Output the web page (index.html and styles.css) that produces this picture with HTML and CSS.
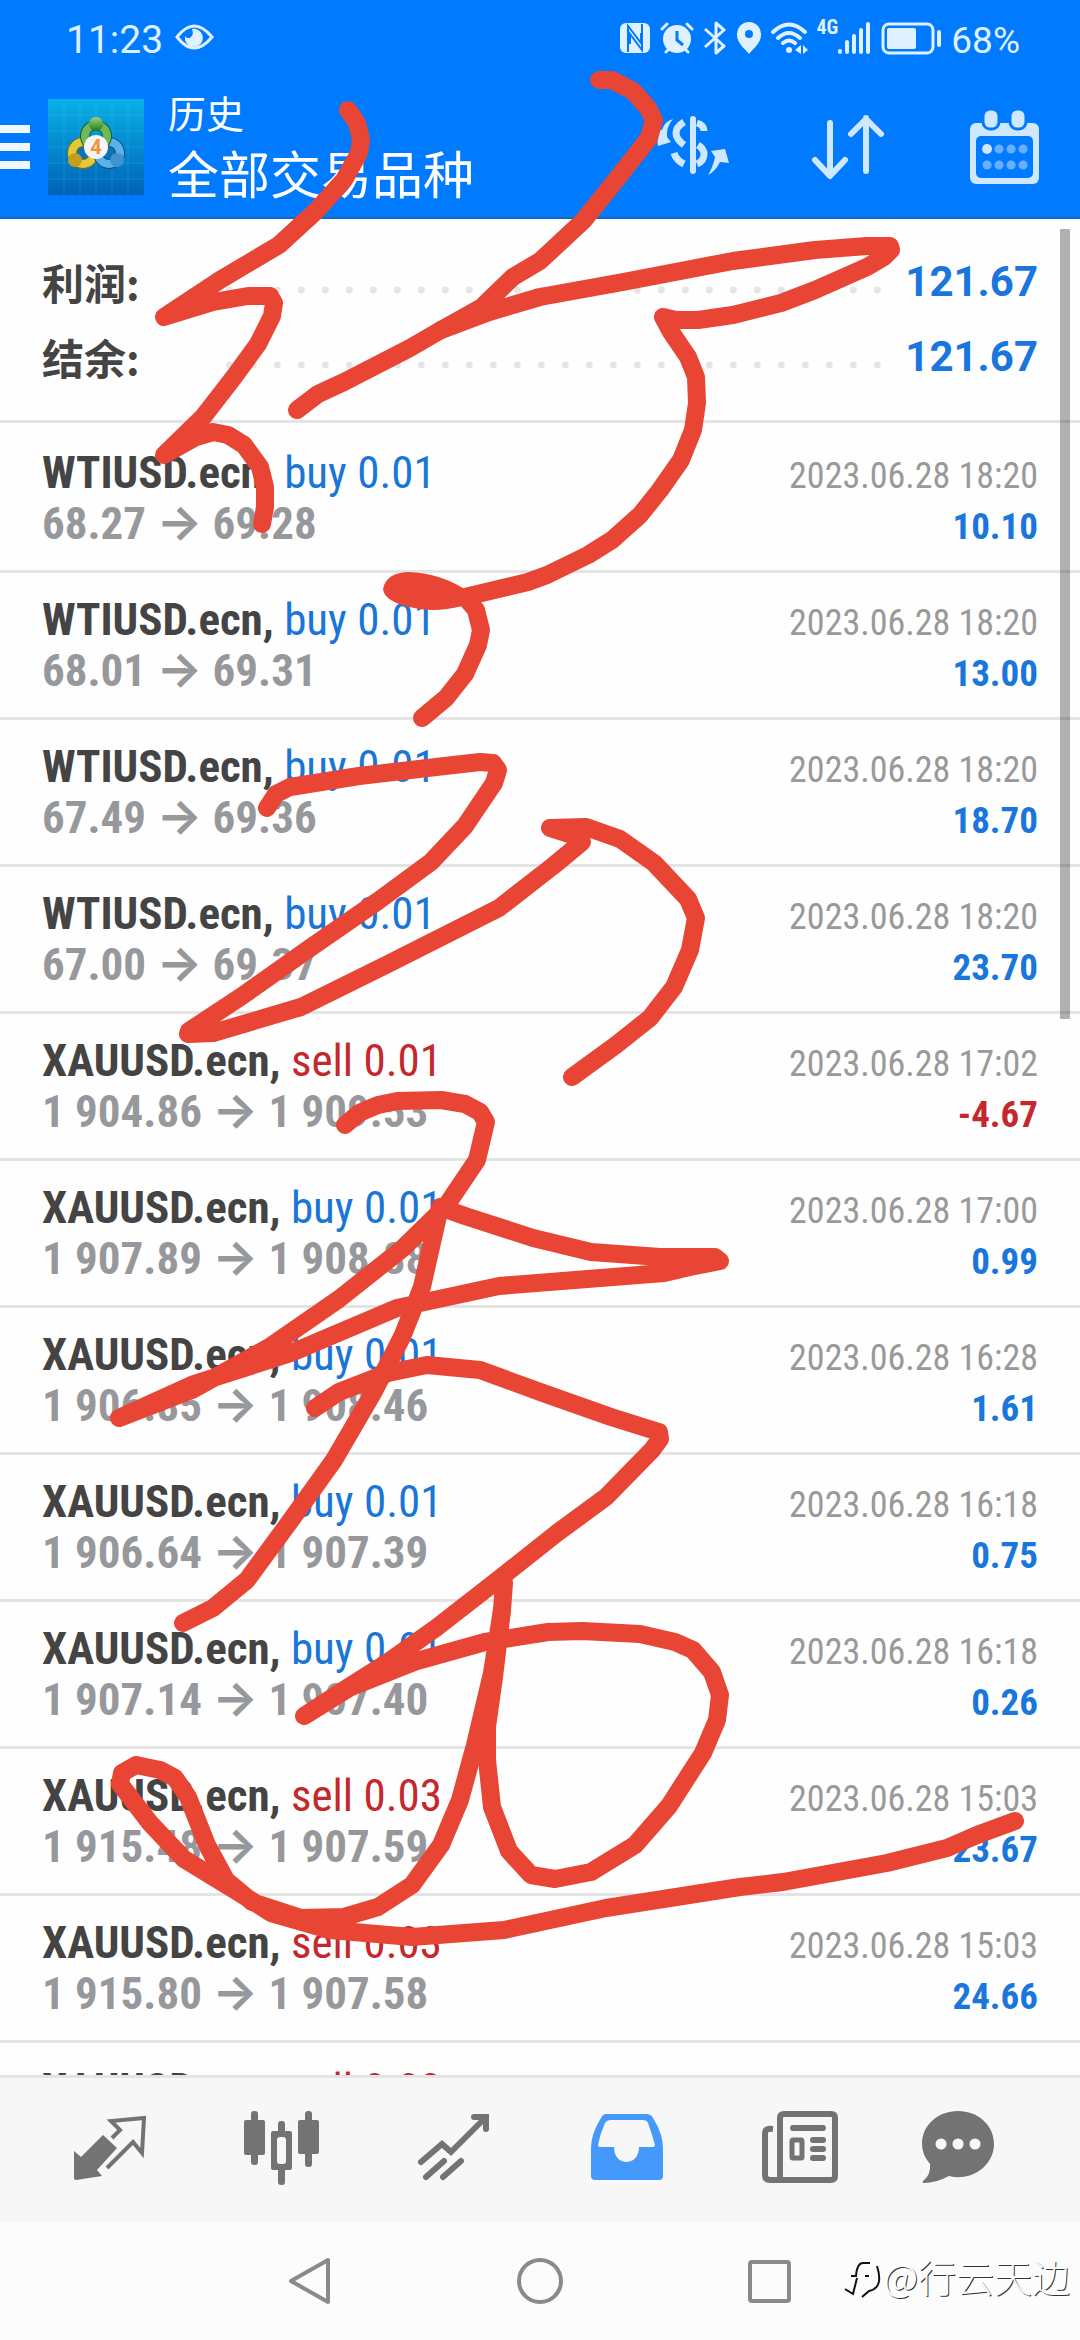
FILE: index.html
```html
<!DOCTYPE html>
<html lang="zh-CN">
  <head>
    <meta charset="UTF-8" />
    <meta name="viewport" content="width=device-width, initial-scale=1" />
    <title>历史</title>
    <link rel="stylesheet" href="styles.css" />
  </head>
  <body>
    <div class="app">
      <header class="top">
        <div class="status-bar">
          <span class="clock">11:23</span>
          <svg class="eye" width="40" height="30" viewBox="0 0 40 30">
            <path d="M2 14Q19-8 37 14Q19 36 2 14z" fill="none" stroke="#dff1ff" stroke-width="3" />
            <path d="M17 6A9 9 0 1 1 10 13Q13 17 16 14Q19 11 17 6z" fill="#dff1ff" />
          </svg>
          <div class="status-icons">
            <svg width="32" height="32" viewBox="0 0 32 32">
              <rect x="1" y="1" width="30" height="30" rx="6" fill="#dff1ff" />
              <path d="M9 30V4L22 21V11M23 2V28L11 12V22" fill="none" stroke="#007bff" stroke-width="2" />
            </svg>
            <svg width="34" height="32" viewBox="0 0 34 32">
              <circle cx="17" cy="17" r="14" fill="#dff1ff" />
              <path d="M2 7L7 2M32 7L27 2M6 30L9 27M28 30L25 27" stroke="#dff1ff" stroke-width="3" stroke-linecap="round" />
              <path d="M17 9V18L23 23" fill="none" stroke="#007bff" stroke-width="3" />
            </svg>
            <svg width="24" height="34" viewBox="0 0 24 34">
              <path d="M2 8L21 25L13 32V2L21 9L2 26" fill="none" stroke="#dff1ff" stroke-width="3" stroke-linejoin="round" />
            </svg>
            <svg width="26" height="32" viewBox="0 0 26 32">
              <path d="M13 0A12 12 0 0 1 25 13C25 21 17 27 13 32C9 27 1 21 1 13A12 12 0 0 1 13 0z" fill="#dff1ff" />
              <circle cx="13" cy="12" r="4" fill="#007bff" />
            </svg>
            <svg width="38" height="32" viewBox="0 0 38 32">
              <path d="M2 10Q18-5 34 10M7 16Q18 6 29 16M12 21Q18 16 24 21" fill="none" stroke="#dff1ff" stroke-width="4" stroke-linecap="round" />
              <circle cx="18" cy="28" r="3" fill="#dff1ff" />
              <path d="M24 28L30 23V32zM37 28L32 23V32z" fill="#dff1ff" />
            </svg>
            <span class="net">4G</span>
            <svg width="34" height="32" viewBox="0 0 34 32">
              <path d="M3 29V30M10 20V30M17 14V30M24 8V30M31 2V30" stroke="#dff1ff" stroke-width="4" stroke-linecap="round" />
            </svg>
            <svg width="62" height="34" viewBox="0 0 62 34">
              <rect x="3" y="3" width="50" height="29" rx="6" fill="none" stroke="#dff1ff" stroke-width="3" />
              <rect x="7" y="7" width="29" height="21" rx="2" fill="#dff1ff" />
              <path d="M59 11V24" stroke="#dff1ff" stroke-width="4" stroke-linecap="round" />
            </svg>
            <span class="percent">68%</span>
          </div>
        </div>

        <div class="toolbar">
          <button class="menu-btn" aria-label="菜单"><i></i><i></i><i></i></button>
          <svg class="logo" width="96" height="96" viewBox="0 0 96 96">
            <defs>
              <linearGradient id="sky" x1="0" y1="0" x2="0" y2="1">
                <stop offset="0" stop-color="#08b0e8" />
                <stop offset="1" stop-color="#0062b6" />
              </linearGradient>
              <linearGradient id="green" x1="0" y1="0" x2="0" y2="1">
                <stop offset="0" stop-color="#9bd673" />
                <stop offset="1" stop-color="#207a25" />
              </linearGradient>
            </defs>
            <rect width="96" height="96" fill="url(#sky)" />
            <path d="M16 0V96M32 0V96M48 0V96M64 0V96M80 0V96M0 16H96M0 32H96M0 48H96M0 64H96M0 80H96" stroke="#4fc0ee" stroke-opacity=".25" />
            <circle cx="35" cy="54" r="11" fill="#0b74b5" stroke="#7a6d10" stroke-width="10" />
            <circle cx="35" cy="54" r="11" fill="none" stroke="#e2c93a" stroke-width="8" />
            <circle cx="61" cy="54" r="11" fill="#0b74b5" stroke="#0d4f86" stroke-width="10" />
            <circle cx="61" cy="54" r="11" fill="none" stroke="#58b1e8" stroke-width="8" />
            <circle cx="48" cy="37" r="11" fill="none" stroke="#1d5c24" stroke-width="10" />
            <circle cx="48" cy="37" r="11" fill="none" stroke="#6dbb58" stroke-width="8" />
            <circle cx="48" cy="25" r="7" fill="url(#green)" />
            <circle cx="27" cy="61" r="7" fill="#c3a01c" />
            <circle cx="69" cy="61" r="7" fill="#3f93cf" />
            <circle cx="48" cy="48" r="12" fill="#f5f5f5" />
            <text class="logo-num" x="48" y="55" text-anchor="middle">4</text>
          </svg>
          <div class="titles">
            <p class="sub">历史</p>
            <h1>全部交易品种</h1>
          </div>
          <div class="actions">
            <button aria-label="货币">
              <svg width="76" height="72" viewBox="0 0 76 72">
                <path d="M39 8V60" stroke="#cfe7ff" stroke-width="6" stroke-linecap="round" />
                <path d="M30 11Q22 16 22 22Q22 28 30 34M43 12Q50 14 50 20M20 42Q22 49 30 53M44 34Q50 38 50 43Q50 50 43 53" fill="none" stroke="#cfe7ff" stroke-width="7" />
                <path d="M19 8Q11 10 8 19L2 17L4 35L17 31L13 26Q12 16 19 8zM54 64Q61 61 66 51L75 52L71 38L57 40L61 46Q59 56 54 64z" fill="#cfe7ff" />
              </svg>
            </button>
            <button aria-label="排序">
              <svg width="76" height="72" viewBox="0 0 76 72">
                <path d="M20 12V63M5 49L20 65L35 49M56 60V7M41 23L56 8L71 23" fill="none" stroke="#cfe7ff" stroke-width="6" stroke-linecap="round" stroke-linejoin="round" />
              </svg>
            </button>
            <button aria-label="日期">
              <svg width="76" height="76" viewBox="0 0 76 76">
                <rect x="4" y="14" width="69" height="61" rx="6" fill="#cfe7ff" />
                <rect x="10" y="27" width="57" height="42" rx="5" fill="#007bff" />
                <rect x="17" y="0" width="16" height="20" rx="7" fill="#cfe7ff" stroke="#007bff" stroke-width="3" />
                <rect x="44" y="0" width="16" height="20" rx="7" fill="#cfe7ff" stroke="#007bff" stroke-width="3" />
                <circle cx="21" cy="40" r="5" fill="#cfe7ff" />
                <path d="M33 40h.1M45 40h.1M57 40h.1M21 56h.1M33 56h.1M45 56h.1M57 56h.1" stroke="#66b0ff" stroke-width="9" stroke-linecap="round" />
              </svg>
            </button>
          </div>
        </div>
      </header>

      <main class="content">
        <dl class="summary">
          <div class="total"><dt>利润:</dt><dd>121.67</dd></div>
          <div class="total"><dt>结余:</dt><dd>121.67</dd></div>
        </dl>

        <ul class="deals">
          <li>
            <p><b>WTIUSD.ecn, <span class="buy">buy 0.01</span></b><time>2023.06.28 18:20</time></p>
            <p><span class="price">68.27 <i>→</i> 69.28</span><span class="profit">10.10</span></p>
          </li>
          <li>
            <p><b>WTIUSD.ecn, <span class="buy">buy 0.01</span></b><time>2023.06.28 18:20</time></p>
            <p><span class="price">68.01 <i>→</i> 69.31</span><span class="profit">13.00</span></p>
          </li>
          <li>
            <p><b>WTIUSD.ecn, <span class="buy">buy 0.01</span></b><time>2023.06.28 18:20</time></p>
            <p><span class="price">67.49 <i>→</i> 69.36</span><span class="profit">18.70</span></p>
          </li>
          <li>
            <p><b>WTIUSD.ecn, <span class="buy">buy 0.01</span></b><time>2023.06.28 18:20</time></p>
            <p><span class="price">67.00 <i>→</i> 69.37</span><span class="profit">23.70</span></p>
          </li>
          <li>
            <p><b>XAUUSD.ecn, <span class="sell">sell 0.01</span></b><time>2023.06.28 17:02</time></p>
            <p><span class="price">1 904.86 <i>→</i> 1 909.53</span><span class="profit loss">-4.67</span></p>
          </li>
          <li>
            <p><b>XAUUSD.ecn, <span class="buy">buy 0.01</span></b><time>2023.06.28 17:00</time></p>
            <p><span class="price">1 907.89 <i>→</i> 1 908.88</span><span class="profit">0.99</span></p>
          </li>
          <li>
            <p><b>XAUUSD.ecn, <span class="buy">buy 0.01</span></b><time>2023.06.28 16:28</time></p>
            <p><span class="price">1 906.85 <i>→</i> 1 908.46</span><span class="profit">1.61</span></p>
          </li>
          <li>
            <p><b>XAUUSD.ecn, <span class="buy">buy 0.01</span></b><time>2023.06.28 16:18</time></p>
            <p><span class="price">1 906.64 <i>→</i> 1 907.39</span><span class="profit">0.75</span></p>
          </li>
          <li>
            <p><b>XAUUSD.ecn, <span class="buy">buy 0.01</span></b><time>2023.06.28 16:18</time></p>
            <p><span class="price">1 907.14 <i>→</i> 1 907.40</span><span class="profit">0.26</span></p>
          </li>
          <li>
            <p><b>XAUUSD.ecn, <span class="sell">sell 0.03</span></b><time>2023.06.28 15:03</time></p>
            <p><span class="price">1 915.48 <i>→</i> 1 907.59</span><span class="profit">23.67</span></p>
          </li>
          <li>
            <p><b>XAUUSD.ecn, <span class="sell">sell 0.03</span></b><time>2023.06.28 15:03</time></p>
            <p><span class="price">1 915.80 <i>→</i> 1 907.58</span><span class="profit">24.66</span></p>
          </li>
          <li>
            <p><b>XAUUSD.ecn, <span class="sell">sell 0.03</span></b></p>
          </li>
        </ul>
        <div class="scrollbar"></div>
      </main>

      <nav class="tabs">
        <button aria-label="行情">
          <svg width="96" height="96" viewBox="0 0 96 96">
            <path d="M12 49L19 55L41 33L55 46L35 68L40 74L14 78Q12 78 12 76z" fill="#737373" />
            <path d="M50 36L58 28L49 19L82 16L80 51L71 40L45 66" fill="none" stroke="#737373" stroke-width="4" />
          </svg>
        </button>
        <button aria-label="图表">
          <svg width="96" height="96" viewBox="0 0 96 96" fill="#737373">
            <rect x="10" y="18" width="21" height="35" rx="2" />
            <rect x="17" y="9" width="7" height="54" rx="3" />
            <rect x="64" y="18" width="21" height="34" rx="2" />
            <rect x="71" y="9" width="7" height="56" rx="3" />
            <rect x="44" y="19" width="7" height="64" rx="3" />
            <rect x="37" y="29" width="21" height="39" rx="2" />
            <rect x="43" y="35" width="9" height="27" rx="3" fill="#f7f7f7" />
          </svg>
        </button>
        <button aria-label="交易">
          <svg width="96" height="96" viewBox="0 0 96 96" fill="none" stroke="#737373" stroke-width="6" stroke-linecap="round">
            <path d="M15 60L36 42L45 50L79 16M68 15H80V27M38 59L20 75M55 59L37 75" />
          </svg>
        </button>
        <button aria-label="历史">
          <svg width="96" height="96" viewBox="0 0 96 96">
            <path fill="#4499fb" fill-rule="evenodd" d="M28 12H68Q73 12 75 16Q85 32 85 46V74Q85 78 81 78H17Q13 78 13 74V46Q13 32 23 16Q25 12 28 12zM33 18Q29 18 27 21Q22 32 20 43Q20 45 22 45H36C36 65 61 65 61 45H75Q77 45 77 43Q74 32 70 21Q69 18 65 18z" />
          </svg>
        </button>
        <button aria-label="新闻">
          <svg width="96" height="96" viewBox="0 0 96 96" fill="none" stroke="#737373" stroke-width="6">
            <path d="M23 27Q15 26 15 31V73Q15 78 20 78H81Q85 78 85 74V16Q85 12 81 12H34Q30 12 30 16V74Q30 78 27 78" />
            <path d="M43 26H73M63 38H73M63 47H73M63 56H73" stroke-linecap="round" />
            <rect x="42" y="38" width="10" height="18" rx="1" stroke-width="5" />
          </svg>
        </button>
        <button aria-label="消息">
          <svg width="96" height="96" viewBox="0 0 96 96">
            <path d="M36 9C56 9 72 23 72 42C72 64 49 80 27 74Q14 81 2 81Q0 81 1 79Q9 73 8 62Q0 53 0 42C0 23 16 9 36 9z" fill="#737373" />
            <path d="M19 42h.1M36 42h.1M53 42h.1" stroke="#f7f7f7" stroke-width="11" stroke-linecap="round" />
          </svg>
        </button>
      </nav>

      <div class="system-nav">
        <button aria-label="返回">
          <svg width="48" height="48" viewBox="0 0 48 48">
            <path d="M5 24L42 3V45z" fill="none" stroke="#8a8a8a" stroke-width="4" stroke-linejoin="round" />
          </svg>
        </button>
        <button aria-label="主页">
          <svg width="48" height="48" viewBox="0 0 48 48">
            <circle cx="24" cy="24" r="21" fill="none" stroke="#8a8a8a" stroke-width="4" />
          </svg>
        </button>
        <button aria-label="最近">
          <svg width="48" height="48" viewBox="0 0 48 48">
            <rect x="4" y="5" width="39" height="39" rx="2" fill="none" stroke="#8a8a8a" stroke-width="4" />
          </svg>
        </button>
        <div class="watermark">
          <svg width="38" height="44" viewBox="0 0 38 44">
            <path d="M2 35L10 40L14 24M8 22H13Q14 9 20 9H27M34 12Q41 34 26 37L19 43M22 22H26" fill="none" stroke="#111" stroke-width="2" />
          </svg>
          <span>@行云天边</span>
        </div>
      </div>

      <!-- red pen drawn over the whole screen -->
      <svg class="pen" viewBox="0 0 1080 2340" preserveAspectRatio="none">
        <g fill="none" stroke="#e84535" stroke-width="18" stroke-linecap="round" stroke-linejoin="round">
          <polyline points="348,110 357,123 361,140 359,153 344,180 316,211 279,245 220,280 164,317 213,302 248,296 270,296 274,303 272,316 258,344 234,377 203,417 164,455 196,437 213,432 228,435 244,445 260,467 265,487 265,507 262,524" />
          <polyline points="599,80 612,80 633,91 648,108 654,120 649,138 616,180 583,221 540,261 513,277 482,307 441,330 410,348 344,382 318,394 297,410" />
          <polyline points="441,330 489,312 540,297 623,282 733,261 815,250 867,246 890,246 891,250 884,257 867,267 815,290 781,303 733,315 698,320 676,320 663,317 671,332 688,357 696,377 697,403 693,430 681,460 660,490 640,515 612,540 588,555 547,575 528,582 465,597 436,598" />
          <polyline points="465,597 476,610 481,630 478,645 465,674 446,698 422,718" />
          <polyline points="267,808 276,794 290,787 359,776 436,767 480,762 493,763 498,770 494,783 465,826 431,862 378,901 310,948 242,996 189,1031 188,1034 213,1033 301,1007 388,964 499,908 553,866 582,842 575,836 550,828 586,827 620,839 654,863 688,899 696,918 690,950 674,987 650,1018 616,1045 572,1077" />
          <polyline points="345,1125 359,1113 378,1105 397,1101 441,1100 465,1104 480,1112 486,1122 477,1160 446,1206 402,1249 339,1299 271,1346 194,1389 119,1418 194,1384 291,1353 397,1308 499,1286 664,1273 690,1267 720,1261 715,1257 660,1257 591,1252 533,1238 465,1216 440,1207 422,1287 402,1337 373,1393 334,1460 291,1520 247,1580 213,1608 183,1623" />
          <polyline points="315,1408 339,1392 388,1373 427,1365 480,1370 543,1393 611,1417 659,1432 660,1439 652,1450 606,1497 557,1533 499,1579 436,1628 388,1662 339,1693 304,1716 349,1688 417,1661 485,1642 548,1632 582,1631 640,1634 675,1642 693,1650 712,1672 720,1695 717,1720 703,1753 669,1806 635,1845 591,1872 555,1879 531,1875 509,1851 492,1807 487,1760 487,1727 494,1677 502,1610 504,1583" />
          <polyline points="502,1610 492,1673 475,1745 460,1800 441,1845 412,1885 378,1907 344,1917 301,1918 252,1902 226,1880 207,1845 188,1797 175,1778 160,1770 136,1765 122,1773 120,1784 150,1823 184,1859 238,1892 271,1913 330,1930 412,1937 504,1930 606,1908 740,1887 783,1882 887,1863 947,1848 977,1835 1015,1821" />
        </g>
        <path d="M383 589Q386 573 408 572Q440 573 466 590L462 606Q436 613 414 608Q384 602 383 589z" fill="#e84535" />
      </svg>
    </div>
  </body>
</html>
```
FILE: styles.css
```css
* {
  box-sizing: border-box;
}

body {
  margin: 0;
  font-family: "Roboto Condensed", "Liberation Sans Narrow", Roboto, "Noto Sans CJK SC", sans-serif;
  background: #fefefe;
}

p,
h1,
ul,
dl,
dd {
  margin: 0;
  padding: 0;
}

button {
  border: 0;
  padding: 0;
  background: none;
  display: flex;
  justify-content: center;
  align-items: center;
}

svg {
  display: block;
  flex: none;
}

.app {
  position: relative;
  display: flex;
  flex-direction: column;
  height: 100vh;
  overflow: hidden;
}

/* header */
.top {
  background: #007bff;
  border-bottom: 2px solid #1a68b4;
  color: #fff;
}

.status-bar {
  display: flex;
  align-items: center;
  height: 76px;
  padding: 0 60px 0 66px;
  font-family: Roboto, sans-serif;
  font-size: 39px;
  color: #dff1ff;
}

.clock,
.percent {
  padding-top: 4px;
}

.eye {
  margin-left: 12px;
}

.status-icons {
  display: flex;
  align-items: center;
  gap: 9px;
  margin-left: auto;
}

.net {
  align-self: flex-start;
  margin: 0 -10px 0 -2px;
  font: bold 20px/24px "Roboto Condensed", sans-serif;
}

.percent {
  font-size: 37px;
}

.toolbar {
  display: flex;
  align-items: center;
  height: 141px;
  padding-right: 38px;
}

.menu-btn {
  flex-direction: column;
  align-items: flex-start;
  gap: 10px;
  width: 48px;
}

.menu-btn i {
  width: 30px;
  height: 8px;
  background: #eff8ff;
}

.logo-num {
  font: bold 20px Roboto, sans-serif;
  fill: #f0943c;
}

.titles {
  margin-left: 24px;
  padding-bottom: 6px;
  font-family: "Noto Sans CJK SC", sans-serif;
}

.titles .sub {
  font-size: 38px;
  line-height: 56px;
}

.titles h1 {
  font-size: 51px;
  line-height: 64px;
  font-weight: normal;
}

.actions {
  display: flex;
  align-items: center;
  gap: 80px;
  margin-left: auto;
}

/* history */
.content {
  position: relative;
  flex: 1;
  min-height: 0;
  overflow: hidden;
}

.summary {
  padding: 25px 42px 26px;
  border-bottom: 3px solid #e4e4e4;
}

.total {
  display: flex;
  align-items: center;
  height: 75px;
  color: #444;
}

.total dt {
  width: 184px;
  font: bold 42px "Noto Sans CJK SC", sans-serif;
}

.total::after {
  content: "";
  order: 1;
  flex: 1;
  height: 8px;
  margin-top: 16px;
  background: radial-gradient(circle, #e4e4e4 3px, transparent 4px) right center / 24px 8px;
}

.total dd {
  order: 2;
  margin-left: 16px;
  font: bold 42px Roboto, sans-serif;
  color: #1976dd;
}

.deals {
  list-style: none;
  padding-top: 3px;
}

.deals li {
  height: 147px;
  padding: 21px 42px 0;
  border-bottom: 3px solid #e4e4e4;
}

.deals p {
  display: flex;
  justify-content: space-between;
  align-items: baseline;
  height: 51px;
  line-height: 51px;
  font-size: 45px;
  color: #444;
}

.deals b span {
  font-weight: normal;
}

.buy {
  color: #1976d6;
}

.sell {
  color: #c4282c;
}

.price {
  font-weight: bold;
  color: #96989b;
}

.price i {
  font: bold 48px/0 Inter, sans-serif;
}

time {
  font-size: 36px;
  color: #999;
}

.profit {
  font-size: 37px;
  font-weight: bold;
  color: #1976dd;
}

.deals .loss {
  color: #c4282c;
}

.scrollbar {
  position: absolute;
  top: 10px;
  right: 10px;
  width: 10px;
  height: 790px;
  background: rgba(0, 0, 0, 0.3);
}

/* bottom */
.tabs {
  display: grid;
  grid-template-columns: repeat(6, 1fr);
  height: 147px;
  padding: 0 24px;
  background: #f7f7f7;
  border-top: 3px solid #e4e4e4;
}

.system-nav {
  position: relative;
  display: grid;
  grid-template-columns: repeat(3, 230px);
  justify-content: center;
  height: 118px;
  background: #fcfcfc;
}

.watermark {
  position: absolute;
  right: 10px;
  bottom: 40px;
  display: flex;
  align-items: center;
  gap: 2px;
  font: 300 38px/48px "Noto Sans CJK SC", sans-serif;
  color: #fff;
  text-shadow: 1px 1px 0 #333;
}

.pen {
  position: absolute;
  top: 0;
  left: 0;
  width: 100%;
  height: 100%;
  pointer-events: none;
}
```
